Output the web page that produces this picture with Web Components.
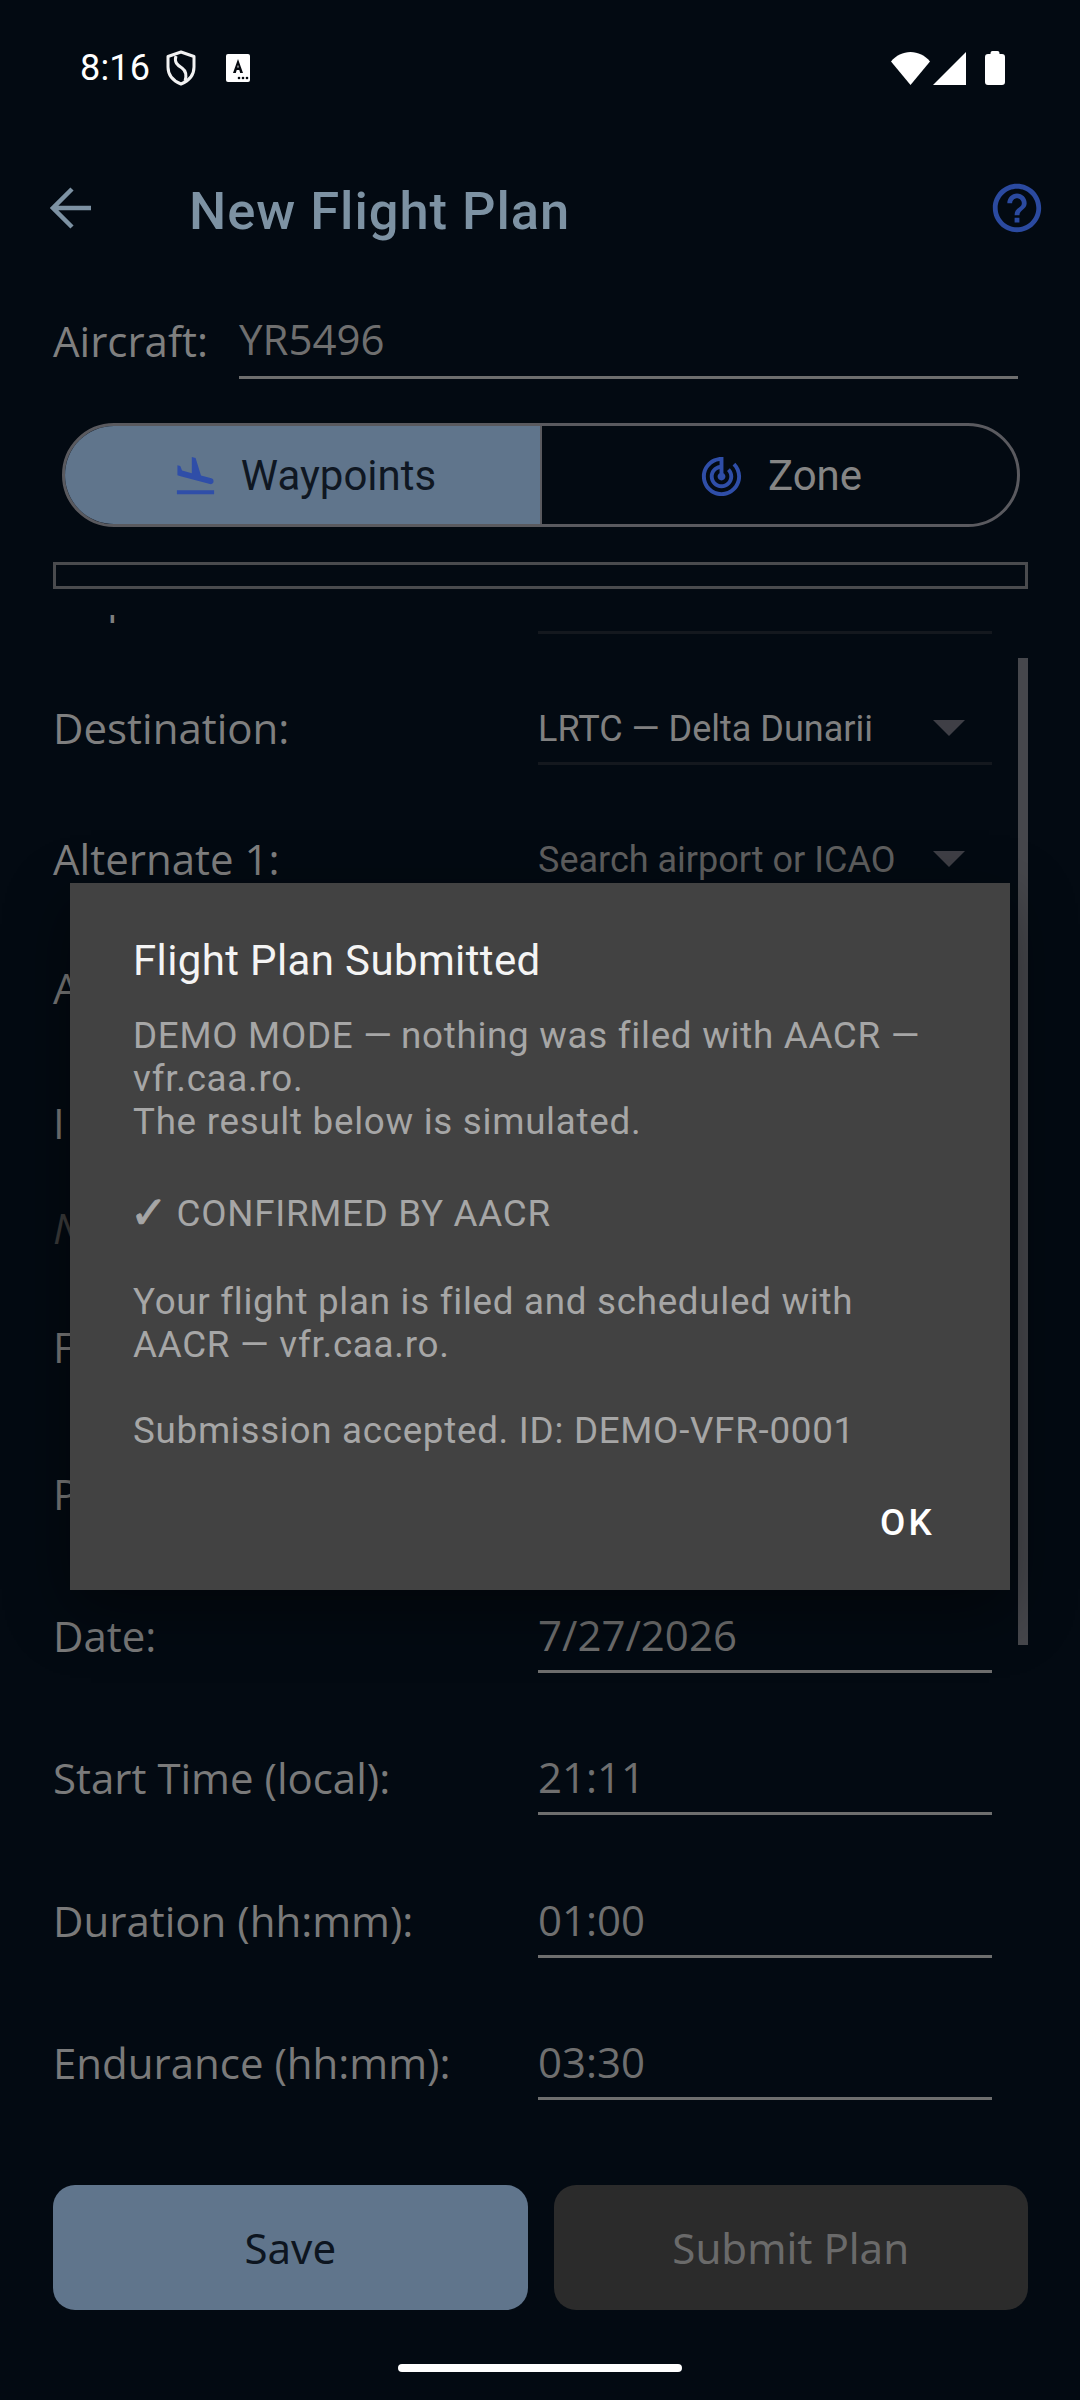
<!DOCTYPE html>
<html lang="en"><head><meta charset="utf-8"><title>New Flight Plan</title>
<style>
html,body{margin:0;padding:0;background:#030a12}
body{width:1080px;height:2400px;overflow:hidden;position:relative;font-family:"Noto Sans",sans-serif}
fp-app{height:2400px}
</style></head><body>
<fp-app>
  <fp-status></fp-status>
  <fp-topbar>New Flight Plan</fp-topbar>
  <fp-aircraft label="Aircraft:" value="YR5496"></fp-aircraft>
  <fp-segment></fp-segment>
  <fp-box></fp-box>
  <fp-scroll>
    <fp-row kind="drop" h="131" label="Departure:" value=""></fp-row>
    <fp-row kind="drop" h="131" label="Destination:" value="LRTC — Delta Dunarii"></fp-row>
    <fp-row kind="drop" h="131" label="Alternate 1:" value="Search airport or ICAO" placeholder></fp-row>
    <fp-row kind="plain" h="131" label="A"></fp-row>
    <fp-row kind="plain" h="135" label="I"></fp-row>
    <fp-row kind="hint" h="102" label="N"></fp-row>
    <fp-row kind="plain" h="122" label="F"></fp-row>
    <fp-row kind="plain" h="147" label="P"></fp-row>
    <fp-row kind="input" h="140" label="Date:" value="7/27/2026"></fp-row>
    <fp-row kind="input" h="142" label="Start Time (local):" value="21:11"></fp-row>
    <fp-row kind="input" h="143" label="Duration (hh:mm):" value="01:00"></fp-row>
    <fp-row kind="input" h="142" label="Endurance (hh:mm):" value="03:30"></fp-row>
  </fp-scroll>
  <fp-actions></fp-actions>
  <fp-handle></fp-handle>
</fp-app>
<fp-dialog heading="Flight Plan Submitted" action="OK">
  <div>DEMO MODE <span style="letter-spacing:-.7px">—</span> nothing was filed with AACR <span style="letter-spacing:-.7px">—</span> vfr.caa.ro.<br>The result below is simulated.</div>
  <div style="margin-top:43px;line-height:55px"><span style="font-size:45px;font-weight:700;letter-spacing:-5px;margin-left:-3px;margin-right:4px;font-family:'DejaVu Sans',sans-serif;line-height:40px;vertical-align:-2px;-webkit-text-stroke:1px #a6a6a6">✓</span> CONFIRMED BY AACR</div>
  <div style="margin-top:39px">Your flight plan is filed and scheduled with AACR — vfr.caa.ro.</div>
  <div style="margin-top:43px">Submission accepted. ID: DEMO-VFR-0001</div>
</fp-dialog>
<script>
function def(name, css, html, init){
  customElements.define(name, class extends HTMLElement{
    constructor(){super();const r=this.attachShadow({mode:'open'});r.innerHTML='<style>'+css+'</style>'+(typeof html==='function'?html(this):html);}
    connectedCallback(){ if(init) init(this,this.shadowRoot); }
  });
}
def('fp-app',':host{display:flex;flex-direction:column;height:2400px}','<slot></slot>');

def('fp-status',`:host{display:flex;align-items:center;height:136px;box-sizing:border-box;padding:0 75px 0 80px;color:#fff;flex:none}
 .t{font:400 36px/1 Roboto,sans-serif;letter-spacing:.2px}
 .l{display:flex;align-items:center;height:136px}
 svg{display:block;flex:none}
 .sp{flex:1}`,
`<div class="l"><span class="t">8:16</span>
 <svg style="margin-left:15px" width="32" height="36" viewBox="0 0 32 36"><path d="M16 2 L29 6.5 V17 C29 25 23.5 31 16 34 C8.500 31 3 25 3 17 V6.500 Z" fill="none" stroke="#f2f2f2" stroke-width="3" stroke-linejoin="round"/><path d="M11 6 C9 12 12 15 17 18 C21 21 22 25 20 31" fill="none" stroke="#f2f2f2" stroke-width="3"/></svg>
 <svg style="margin-left:29px" width="24" height="28" viewBox="0 0 24 28"><rect width="24" height="28" rx="2" fill="#fff"/><path d="M12 5 L17 19 H14.200 L13.300 16 H10.700 L9.800 19 H7 Z M11.300 13.500 H12.700 L12 10.800 Z" fill="#05090f" fill-rule="evenodd"/><circle cx="13" cy="24" r="1.300" fill="#05090f"/><circle cx="17" cy="24" r="1.300" fill="#05090f"/><circle cx="21" cy="24" r="1.300" fill="#05090f"/></svg></div>
 <div class="sp"></div>
 <svg width="39" height="33" viewBox="0 0 39 33"><path d="M19.500 33 L0 9.500 C5 3.500 12 0 19.500 0 S34 3.500 39 9.500 Z" fill="#fff"/></svg>
 <svg style="margin-left:3px" width="33" height="33" viewBox="0 0 33 33"><path d="M33 0 V33 H0 Z" fill="#fff"/></svg>
 <svg style="margin-left:19px" width="20" height="34" viewBox="0 0 20 34"><path d="M5.500 3 V2 Q5.500 0 7.500 0 H12.500 Q14.500 0 14.500 2 V3 H17 Q20 3 20 6 V31 Q20 34 17 34 H3 Q0 34 0 31 V6 Q0 3 3 3 Z" fill="#fff"/></svg>`);

def('fp-topbar',`:host{display:flex;align-items:center;height:149px;flex:none;box-sizing:border-box;padding:0 39px 6px 50px;color:#7d92a3}
 .t{font:500 52.5px/1 Roboto,sans-serif;letter-spacing:.95px;margin-left:97px;flex:1;position:relative;top:4px}
 svg{display:block;flex:none}`,
`<svg width="42" height="42" viewBox="0 0 42 42"><path d="M41 21 H4 M22 2 L3 21 L22 40" fill="none" stroke="#7d92a3" stroke-width="4.500"/></svg>
 <div class="t"><slot></slot></div>
 <svg style="margin-right:-5px" width="58" height="58" viewBox="0 0 24 24"><path fill="#2b4aa0" d="M11 18h2v-2h-2v2zm1-16C6.480 2 2 6.480 2 12s4.480 10 10 10 10-4.480 10-10S17.520 2 12 2zm0 18c-4.410 0-8-3.590-8-8s3.590-8 8-8 8 3.590 8 8-3.590 8-8 8zm0-14c-2.210 0-4 1.790-4 4h2c0-1.100.9-2 2-2s2 .9 2 2c0 2-3 1.750-3 5h2c0-2.250 3-2.500 3-5 0-2.210-1.790-4-4-4z"/></svg>`);

def('fp-aircraft',`:host{display:flex;height:94px;flex:none;box-sizing:border-box;padding:0 62px 0 53px;align-items:flex-end}
 .l{font:400 42px/56px "Open Sans",sans-serif;color:#7f7f7f;width:186px;padding-bottom:10px}
 .v{flex:1;font:400 42px/56px "Open Sans",sans-serif;color:#6f6f6f;border-bottom:3px solid #6e6e6e;padding-bottom:9px}`,
 h=>`<div class="l">${h.getAttribute('label')}</div><div class="v">${h.getAttribute('value')}</div>`);

def('fp-segment',`:host{display:flex;height:104px;flex:none;box-sizing:border-box;margin:44px 60px 0 62px;border:3px solid #5a5a5f;border-radius:52px;overflow:hidden;font:400 42px/1 Roboto,sans-serif}
 .b{display:flex;align-items:center;justify-content:center;flex:1;gap:22px;padding-top:2px;box-sizing:border-box}
 .a{flex:0 0 477px;background:#60758c;color:#0f1722;border-right:2px solid #5a5a5f;padding-left:3px}
 .z{color:#858585;gap:23px;padding-left:1px}
 svg{display:block;flex:none}`,
`<div class="b a"><svg width="47" height="47" viewBox="0 0 24 24"><path fill="#2f4ea8" d="M2.500 19h19v2h-19zm7.180-5.730l4.350 1.160 5.310 1.420c.8.210 1.620-.26 1.840-1.060.21-.8-.26-1.620-1.060-1.840l-5.310-1.420-2.760-9.020L10.120 2v8.280L5.150 8.950l-.93-2.320-1.450-.39v5.170l1.600.43 5.310 1.430z"/></svg><span>Waypoints</span></div>
 <div class="b z"><svg width="47" height="47" viewBox="0 0 24 24"><path fill="#2f4ea8" d="M19.070 4.930l-1.410 1.410C19.100 7.790 20 9.790 20 12c0 4.420-3.580 8-8 8s-8-3.580-8-8c0-4.080 3.050-7.440 7-7.930v2.020C8.160 6.570 6 9.030 6 12c0 3.310 2.690 6 6 6s6-2.690 6-6c0-1.660-.67-3.160-1.760-4.240l-1.410 1.410C15.550 9.900 16 10.900 16 12c0 2.210-1.790 4-4 4s-4-1.790-4-4c0-1.860 1.280-3.410 3-3.860v2.140c-.6.350-1 .98-1 1.720 0 1.100.9 2 2 2s2-.9 2-2c0-.74-.4-1.380-1-1.720V2h-1C6.480 2 2 6.480 2 12s4.480 10 10 10 10-4.480 10-10c0-2.760-1.120-5.260-2.930-7.070z"/></svg><span>Zone</span></div>`);

def('fp-box',':host{display:block;height:27px;flex:none;box-sizing:border-box;margin:35px 52px 0 53px;border:3px solid #4a4b4e}','');

def('fp-scroll',`:host{display:block;flex:none;height:1515px;margin-top:26px;overflow:hidden;position:relative}
 .in{margin-top:-112px;padding:0 88px 0 53px}
 .bar{position:absolute;left:1018px;width:10px;top:43px;height:987px;background:#46474c}`,
 '<div class="in"><slot></slot></div><div class="bar"></div>');

def('fp-row',`:host{display:flex;align-items:flex-end;box-sizing:border-box;height:calc(var(--h)*1px)}
 .l{width:485px;flex:none;font:400 42px/56px "Open Sans",sans-serif;color:#7a7a7a;padding-bottom:9px}
 :host([kind=plain]) .l{padding-bottom:11px}
 .v{flex:1;height:56px;font:400 42px/56px "Open Sans",sans-serif;color:#6f6f6f;border-bottom:3px solid #6e6e6e;padding-bottom:7px;position:relative;white-space:nowrap}
 :host([kind=drop]) .l{padding-bottom:9px;color:#7f7f7f}
 :host([kind=drop]) .v{font:400 36px/61px Roboto,sans-serif;color:#808080;border-bottom-color:#14181e;padding-bottom:4px;height:59px}
 :host([placeholder]) .v{color:#5f5f5f}
 .c{position:absolute;right:27px;top:21px;width:0;height:0;border-left:16px solid transparent;border-right:16px solid transparent;border-top:16px solid #3f3f46}
 :host([kind=hint]) .l{font-style:italic;color:#3c3c3c;padding-bottom:8px}`,
 h=>{const k=h.getAttribute('kind');h.style.setProperty('--h',h.getAttribute('h'));
  const l=`<div class="l">${h.getAttribute('label')}</div>`;
  if(k==='plain'||k==='hint')return l;
  return l+`<div class="v">${h.getAttribute('value')||''}${k==='drop'?'<i class="c"></i>':''}</div>`;});

def('fp-actions',`:host{display:flex;gap:26px;flex:none;height:125px;margin:55px 52px 0 53px;font:400 42px/1 "Noto Sans",sans-serif}
 div{flex:1;display:flex;align-items:center;justify-content:center;border-radius:22px}
 .s{background:#60758c;color:#0d1520}.d{background:#2b2b2b;color:#6a6a6a}`,
 '<div class="s">Save</div><div class="d">Submit Plan</div>');

def('fp-handle',`:host{display:block;flex:none;width:284px;height:8px;margin:54px auto 0;background:#fff;border-radius:4px}`,'');

def('fp-dialog',`:host{position:absolute;left:70px;top:883px;width:940px;height:707px;box-sizing:border-box;background:#424242;padding:0 63px;display:flex;flex-direction:column;box-shadow:0 20px 60px rgba(0,0,0,.45)}
 h2{margin:48px 0 0;font:400 42px/60px Roboto,sans-serif;color:#f4f4f4;letter-spacing:.37px}
 .b{margin-top:23px;font:400 36.75px/43px Roboto,sans-serif;color:#a6a6a6;letter-spacing:.72px}
 .a{position:absolute;right:78px;top:620px;font:500 36.75px/40px Roboto,sans-serif;color:#fff;letter-spacing:3.2px;margin-right:-3px}`,
 h=>`<h2>${h.getAttribute('heading')}</h2><div class="b"><slot></slot></div><div class="a">${h.getAttribute('action')}</div>`);
</script>
</body></html>
